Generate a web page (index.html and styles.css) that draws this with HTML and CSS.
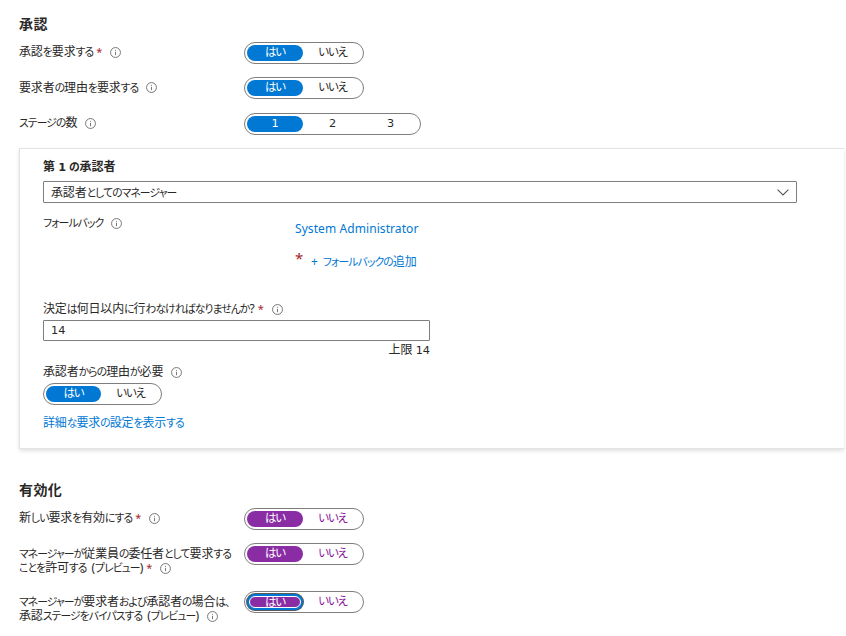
FILE: index.html
```html
<!DOCTYPE html>
<html lang="ja">
<head>
<meta charset="utf-8">
<title>承認</title>
<link rel="stylesheet" href="styles.css">
</head>
<body>
<svg class="defs" aria-hidden="true"><symbol id="info" viewBox="0 0 11 11"><circle cx="5.5" cy="5.5" r="4.95"/><path d="M5.5 4.8V8.2M5.5 2.9V3.8"/></symbol></svg>
<main>
<section class="approval">
  <h2>承認</h2>
  <div class="row">
    <div class="label">承認<i>を</i>要求<i>する</i><b class="req">*</b><svg class="info"><use href="#info"/></svg></div>
    <div class="toggle"><span class="on"><i>はい</i></span><span><i>いいえ</i></span></div>
  </div>
  <div class="row row-tall">
    <div class="label">要求者<i>の</i>理由<i>を</i>要求<i>する</i><svg class="info"><use href="#info"/></svg></div>
    <div class="toggle"><span class="on"><i>はい</i></span><span><i>いいえ</i></span></div>
  </div>
  <div class="row">
    <div class="label"><i>ステージの</i>数<svg class="info"><use href="#info"/></svg></div>
    <div class="toggle toggle-num"><span class="on">1</span><span>2</span><span>3</span></div>
  </div>
</section>
<section class="card">
  <h3>第 <span class="num">1</span> <i>の</i>承認者</h3>
  <div class="select"><span>承認者<i>としてのマネージャー</i></span><svg class="chevron" viewBox="0 0 12 7"><path d="M.6.6L6 6L11.4.6"/></svg></div>
  <div class="fallback">
    <div class="label"><i>フォールバック</i><svg class="info"><use href="#info"/></svg></div>
    <div class="people">
      <a class="person">System Administrator</a>
      <div class="add"><b class="star">*</b><a><span class="plus">+</span><i>フォールバックの</i>追加</a></div>
    </div>
  </div>
  <div class="label">決定<i>は</i>何日以内<i>に</i>行<i>わなければなりませんか</i>?<b class="req">*</b><svg class="info"><use href="#info"/></svg></div>
  <div class="input num">14</div>
  <div class="limit">上限 <span class="num">14</span></div>
  <div class="label">承認者<i>からの</i>理由<i>が</i>必要<svg class="info"><use href="#info"/></svg></div>
  <div class="toggle toggle-card"><span class="on"><i>はい</i></span><span><i>いいえ</i></span></div>
  <a class="more">詳細<i>な</i>要求<i>の</i>設定<i>を</i>表示<i>する</i></a>
</section>
<section class="enable">
  <h2>有効化</h2>
  <div class="row">
    <div class="label">新<i>しい</i>要求<i>を</i>有効<i>にする</i><b class="req">*</b><svg class="info"><use href="#info"/></svg></div>
    <div class="toggle purple"><span class="on"><i>はい</i></span><span><i>いいえ</i></span></div>
  </div>
  <div class="row row-two">
    <div class="label"><i>マネージャーが</i>従業員<i>の</i>委任者<i>として</i>要求<i>する</i><br><i>ことを</i>許可<i>する</i> (<i>プレビュー</i>)<b class="req">*</b><svg class="info"><use href="#info"/></svg></div>
    <div class="toggle purple"><span class="on"><i>はい</i></span><span><i>いいえ</i></span></div>
  </div>
  <div class="row row-two">
    <div class="label"><i>マネージャーが</i>要求者<i>および</i>承認者<i>の</i>場合<i>は、</i><br>承認<i>ステージをバイパスする</i> (<i>プレビュー</i>)<svg class="info"><use href="#info"/></svg></div>
    <div class="toggle purple"><span class="on focus"><i>はい</i></span><span><i>いいえ</i></span></div>
  </div>
</section>
</main>
</body>
</html>
```
FILE: styles.css
```css
* { box-sizing: border-box; }
body {
  margin: 0;
  background: #fff;
  color: #292827;
  font: 12px/14px "Noto Sans", "Noto Sans CJK JP", sans-serif;
  font-feature-settings: "palt";
  overflow: hidden;
}
main { width: 844px; padding: 14px 0 0 19px; }
.defs { position: absolute; width: 0; height: 0; }
h2, h3 { margin: 0; font-weight: 700; }
h2 { font-size: 14px; line-height: 19px; letter-spacing: .4px; }
h3 { height: 16px; font-size: 12px; line-height: 17px; white-space: nowrap; }
a { color: #0078d4; white-space: nowrap; }
.label, .select, .more { letter-spacing: -.15px; }
i { font-style: normal; font-size: 10.8px; letter-spacing: -.88px; }
h3 i { letter-spacing: -.4px; }
.num, .toggle-num { font-family: "DejaVu Sans", sans-serif; font-size: 11.3px; }
.approval { height: 134px; }
.approval h2 { margin-bottom: 9px; }
.row { display: flex; align-items: flex-start; height: 35px; }
.row-tall { height: 36px; }
.row-two { height: 48px; }
.row > .label { width: 225px; padding-top: 3px; }
.row-tall > .label, .row-two > .label { padding-top: 4px; }
.label { white-space: nowrap; line-height: 14px; height: 14px; word-spacing: 2px; }
.req { color: #a4262c; font-size: 11px; font-weight: 400; margin-left: 3px; }
.info {
  width: 11px;
  height: 11px;
  margin-left: 8px;
  vertical-align: -2px;
  fill: none;
  stroke: #6b6a69;
  stroke-width: .9;
}
.row-tall .info { vertical-align: -1px; }
.toggle {
  display: flex;
  width: 120px;
  height: 22px;
  padding: 2px;
  border: 1px solid #807e7c;
  border-radius: 11px;
  line-height: 14px;
}
.toggle i { font-size: 11.5px; letter-spacing: -1.2px; }
.toggle span { flex: none; width: 59px; height: 16px; border-radius: 8px; text-align: center; }
.toggle span.on { width: 56px; background: #0078d4; color: #fff; }
.toggle.toggle-num { width: 177px; line-height: 15px; }
.toggle-num span:last-child { width: 57px; }
.purple { color: #881798; }
.toggle.purple span.on { background: #8a2da5; }
.toggle.purple span.focus {
  width: 52px;
  height: 12px;
  margin: 2px;
  border: 1px solid #fff;
  border-radius: 6px;
  line-height: 10px;
  box-shadow: 0 0 0 2px #0078d4, 0 0 0 3px #5b5957;
}
.card {
  height: 301px;
  padding: 9px 0 0 23px;
  border: 1px solid #e3e3e3;
  border-right: 0;
  box-shadow: 0 2px 4px rgba(0, 0, 0, .12);
}
.select {
  display: flex;
  align-items: center;
  justify-content: space-between;
  width: 754px;
  height: 22px;
  margin-top: 7px;
  padding: 1px 7px 0;
  border: 1px solid #807e7c;
  border-radius: 1px;
}
.chevron { width: 12px; height: 7px; margin-top: -1px; fill: none; stroke: #555; stroke-width: 1.1; }
.fallback { display: flex; height: 99px; padding-top: 13px; }
.fallback > .label { width: 252px; }
.people { padding-top: 6px; }
.person { display: block; letter-spacing: .08px; }
.add { display: flex; margin-top: 19px; }
.star { width: 16px; color: #a4262c; font-size: 15px; font-weight: 400; line-height: 7px; }
.plus { margin: 0 5px 0 0; }
.input {
  width: 387px;
  height: 21px;
  margin-top: 4px;
  padding-left: 7px;
  border: 1px solid #807e7c;
  border-radius: 1px;
  line-height: 20px;
}
.limit { width: 387px; height: 14px; margin: 2px 0 8px; text-align: right; }
.toggle-card { width: 119px; margin: 4px 0 11px; }
.toggle-card span.on { width: 55px; }
.more { display: block; }
.enable { height: 180px; padding-top: 31px; }
.enable h2 { margin-bottom: 9px; }
```
